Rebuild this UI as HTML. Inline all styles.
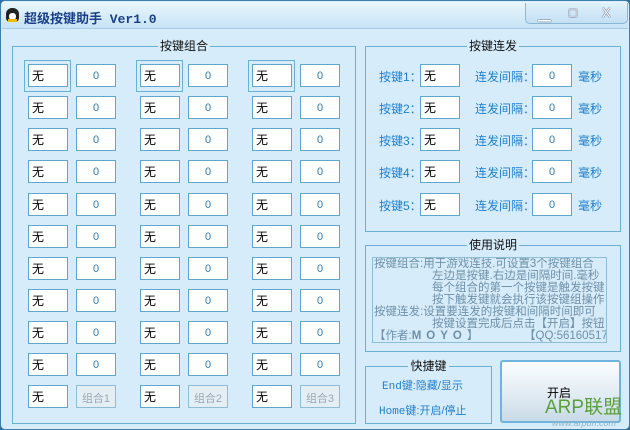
<!DOCTYPE html>
<html><head><meta charset="utf-8"><style>
*{margin:0;padding:0;box-sizing:border-box}
html,body{width:630px;height:430px;overflow:hidden}
body{font-family:"Liberation Sans","Noto Sans CJK SC","WenQuanYi Zen Hei",sans-serif;font-size:12px;background:#2d6f9c;position:relative}
.win{position:absolute;left:0;top:0;width:630px;height:430px;background:#d6ecfa;border:1px solid #3f7fae;border-radius:5px;overflow:hidden}
.tb{position:absolute;left:1px;top:1px;width:626px;height:27px;background:linear-gradient(#eaf6fd,#c7e3f6);border-bottom:1px solid #a9cfe8}
.title{position:absolute;left:22px;top:6px;font-size:13px;font-weight:bold;color:#1a3f8a;font-family:"Liberation Mono","Noto Sans CJK SC",monospace;white-space:nowrap}
.btns{position:absolute;left:523px;top:1px;width:103px;height:21px;border:1px solid #8ab7d6;border-top:none;border-radius:0 0 5px 5px;background:linear-gradient(#dff0fb,#c4e0f4)}
.btns span{position:absolute;top:2px;color:#fff;font-size:13px;text-shadow:0 0 1px #335,0 0 1px #335}
.g{position:absolute;border:1px solid #6bb0d3}
.gt{position:absolute;top:-9px;left:0;right:0;text-align:center;font-size:12px;line-height:16px;white-space:nowrap}
.gt span{background:#d6ecfa;padding:0 2px;color:#111}
.a{position:absolute;white-space:nowrap}
.k{position:absolute;width:40px;height:23px;background:#fff;border:1px solid #5ea6cc;padding:2px 0 0 3px;font-size:12px;color:#000}
.v{position:absolute;width:40px;height:23px;background:#fff;border:1px solid #5ea6cc;text-align:center;padding-top:5px;font-size:11px;color:#2a7ab8}
.c{position:absolute;width:40px;height:23px;background:#e4eef5;border:1px solid #8fbdd8;text-align:center;padding-top:4px;font-size:11px;color:#9aa8b2;white-space:nowrap}
.f{position:absolute;width:47px;height:32px;border:1px solid #6ab0d3}
.l{position:absolute;color:#1f7fd0;font-size:12px;white-space:nowrap}
</style></head><body>
<div class="win">
<div class="tb">
<div class="a" style="left:4px;top:6px;width:13px;height:14px;border-radius:6px 6px 4px 4px;background:#222"><div class="a" style="left:3px;top:5px;width:7px;height:7px;background:#fff;border-radius:3px"></div><div class="a" style="left:2px;top:11px;width:9px;height:3px;background:#f5b800"></div></div>
<div class="title">超级按键助手 Ver1.0</div>
<div class="btns"><span style="left:12px">▁</span><span style="left:43px">□</span><span style="left:76px">X</span></div>
</div>

<div class="g" style="left:11px;top:45px;width:344px;height:378px"><div class="gt"><span>按键组合</span></div></div>
<div class="g" style="left:364px;top:45px;width:256px;height:186px"><div class="gt"><span>按键连发</span></div></div>
<div class="g" style="left:364px;top:244px;width:256px;height:107px"><div class="gt"><span>使用说明</span></div></div>
<div class="g" style="left:364px;top:365px;width:127px;height:58px"><div class="gt"><span>快捷键</span></div></div>

<div class="f" style="left:23px;top:59px"></div><div class="f" style="left:135px;top:59px"></div><div class="f" style="left:247px;top:59px"></div>

<div class="k" style="left:27px;top:63px">无</div><div class="v" style="left:75px;top:63px">0</div><div class="k" style="left:139px;top:63px">无</div><div class="v" style="left:187px;top:63px">0</div><div class="k" style="left:251px;top:63px">无</div><div class="v" style="left:299px;top:63px">0</div>
<div class="k" style="left:27px;top:95px">无</div><div class="v" style="left:75px;top:95px">0</div><div class="k" style="left:139px;top:95px">无</div><div class="v" style="left:187px;top:95px">0</div><div class="k" style="left:251px;top:95px">无</div><div class="v" style="left:299px;top:95px">0</div>
<div class="k" style="left:27px;top:127px">无</div><div class="v" style="left:75px;top:127px">0</div><div class="k" style="left:139px;top:127px">无</div><div class="v" style="left:187px;top:127px">0</div><div class="k" style="left:251px;top:127px">无</div><div class="v" style="left:299px;top:127px">0</div>
<div class="k" style="left:27px;top:159px">无</div><div class="v" style="left:75px;top:159px">0</div><div class="k" style="left:139px;top:159px">无</div><div class="v" style="left:187px;top:159px">0</div><div class="k" style="left:251px;top:159px">无</div><div class="v" style="left:299px;top:159px">0</div>
<div class="k" style="left:27px;top:192px">无</div><div class="v" style="left:75px;top:192px">0</div><div class="k" style="left:139px;top:192px">无</div><div class="v" style="left:187px;top:192px">0</div><div class="k" style="left:251px;top:192px">无</div><div class="v" style="left:299px;top:192px">0</div>
<div class="k" style="left:27px;top:224px">无</div><div class="v" style="left:75px;top:224px">0</div><div class="k" style="left:139px;top:224px">无</div><div class="v" style="left:187px;top:224px">0</div><div class="k" style="left:251px;top:224px">无</div><div class="v" style="left:299px;top:224px">0</div>
<div class="k" style="left:27px;top:256px">无</div><div class="v" style="left:75px;top:256px">0</div><div class="k" style="left:139px;top:256px">无</div><div class="v" style="left:187px;top:256px">0</div><div class="k" style="left:251px;top:256px">无</div><div class="v" style="left:299px;top:256px">0</div>
<div class="k" style="left:27px;top:288px">无</div><div class="v" style="left:75px;top:288px">0</div><div class="k" style="left:139px;top:288px">无</div><div class="v" style="left:187px;top:288px">0</div><div class="k" style="left:251px;top:288px">无</div><div class="v" style="left:299px;top:288px">0</div>
<div class="k" style="left:27px;top:320px">无</div><div class="v" style="left:75px;top:320px">0</div><div class="k" style="left:139px;top:320px">无</div><div class="v" style="left:187px;top:320px">0</div><div class="k" style="left:251px;top:320px">无</div><div class="v" style="left:299px;top:320px">0</div>
<div class="k" style="left:27px;top:352px">无</div><div class="v" style="left:75px;top:352px">0</div><div class="k" style="left:139px;top:352px">无</div><div class="v" style="left:187px;top:352px">0</div><div class="k" style="left:251px;top:352px">无</div><div class="v" style="left:299px;top:352px">0</div>
<div class="k" style="left:27px;top:384px">无</div><div class="c" style="left:75px;top:384px">组合1</div><div class="k" style="left:139px;top:384px">无</div><div class="c" style="left:187px;top:384px">组合2</div><div class="k" style="left:251px;top:384px">无</div><div class="c" style="left:299px;top:384px">组合3</div>

<div class="l" style="left:378px;top:67px">按键1：</div><div class="k" style="left:419px;top:63px">无</div><div class="l" style="left:474px;top:67px">连发间隔：</div><div class="v" style="left:531px;top:63px">0</div><div class="l" style="left:577px;top:67px">毫秒</div>
<div class="l" style="left:378px;top:99px">按键2：</div><div class="k" style="left:419px;top:95px">无</div><div class="l" style="left:474px;top:99px">连发间隔：</div><div class="v" style="left:531px;top:95px">0</div><div class="l" style="left:577px;top:99px">毫秒</div>
<div class="l" style="left:378px;top:131px">按键3：</div><div class="k" style="left:419px;top:127px">无</div><div class="l" style="left:474px;top:131px">连发间隔：</div><div class="v" style="left:531px;top:127px">0</div><div class="l" style="left:577px;top:131px">毫秒</div>
<div class="l" style="left:378px;top:163px">按键4：</div><div class="k" style="left:419px;top:159px">无</div><div class="l" style="left:474px;top:163px">连发间隔：</div><div class="v" style="left:531px;top:159px">0</div><div class="l" style="left:577px;top:163px">毫秒</div>
<div class="l" style="left:378px;top:196px">按键5：</div><div class="k" style="left:419px;top:192px">无</div><div class="l" style="left:474px;top:196px">连发间隔：</div><div class="v" style="left:531px;top:192px">0</div><div class="l" style="left:577px;top:196px">毫秒</div>

<div class="a" style="left:371px;top:256px;width:235px;height:86px;border:1px solid #8fbdd8;color:#6f8fa8;font-size:11.5px;line-height:12px;padding:0 0 0 1px;overflow:hidden">
<div>按键组合:用于游戏连技.可设置3个按键组合</div>
<div style="padding-left:58px">左边是按键.右边是间隔时间.毫秒</div>
<div style="padding-left:58px">每个组合的第一个按键是触发按键</div>
<div style="padding-left:58px">按下触发键就会执行该按键组操作</div>
<div>按键连发:设置要连发的按键和间隔时间即可</div>
<div style="padding-left:58px">按键设置完成后点击【开启】按钮</div>
<div style="position:relative">【作者:<b style="letter-spacing:5px">MOYO</b>】<span style="position:absolute;left:150px">【QQ:56160517】</span></div>
</div>

<div class="l" style="left:381px;top:376px;font-size:11px"><span style="font-family:'Liberation Mono',monospace">End</span>键:隐藏/显示</div>
<div class="l" style="left:378px;top:401px;font-size:11px"><span style="font-family:'Liberation Mono',monospace">Home</span>键:开启/停止</div>

<div class="a" style="left:499px;top:359px;width:121px;height:63px;border:2px solid #6eb4dc;border-radius:3px;background:linear-gradient(#fbfdff,#dfeaf2 60%,#c8dae7)"></div>
<div class="a" style="left:546px;top:383px;font-size:12px;color:#000">开启</div>
<div class="a" style="left:544px;top:396px;font-size:19px;line-height:22px;color:#5aa03a">ARP联盟</div>
<div class="a" style="left:551px;top:417px;font-size:9px;line-height:10px;color:#8fb5c8;font-style:italic">www.arpun.com</div>
</div>
</body></html>
